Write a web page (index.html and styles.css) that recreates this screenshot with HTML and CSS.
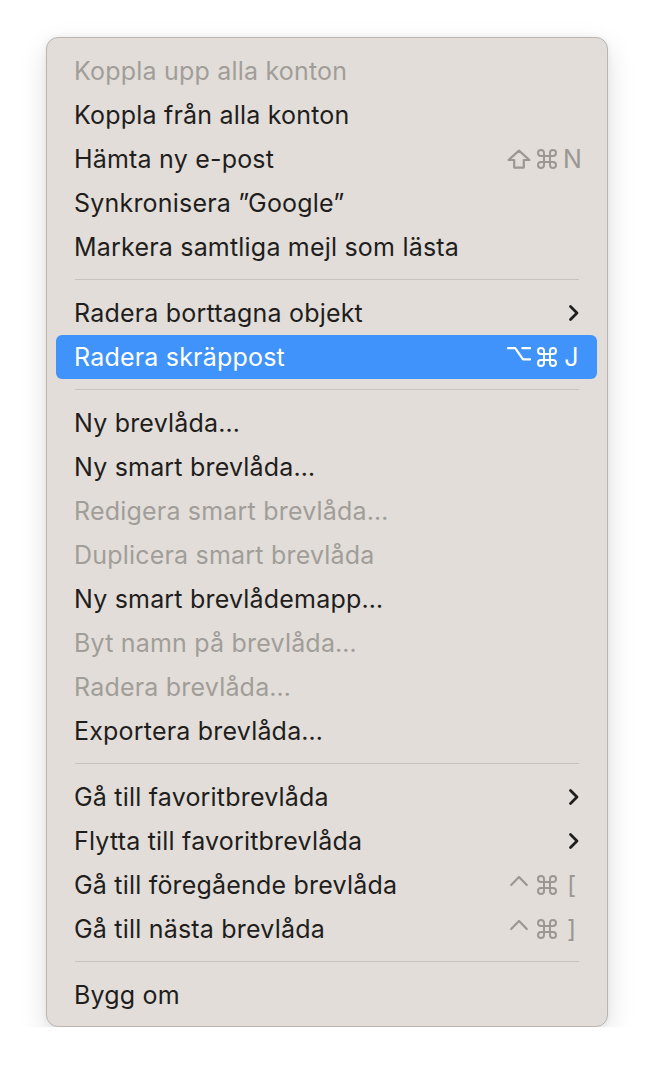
FILE: index.html
```html
<!DOCTYPE html>
<html lang="sv">
<head>
  <meta charset="UTF-8">
  <title>Brevlåda</title>
  <link rel="stylesheet" href="styles.css">
</head>
<body>
  <div class="menu">
    <div class="item disabled">Koppla upp alla konton</div>
    <div class="item">Koppla från alla konton</div>
    <div class="item">Hämta ny e-post
      <span class="keys">
        <svg class="mod wide" viewBox="0 0 24 20"><path d="M12 1.6 L22.4 11 H16.8 V18.6 H7.2 V11 H1.6 Z" /></svg>
        <svg class="mod" viewBox="2 2 20 20"><path d="M15 6v12a3 3 0 1 0 3-3H6a3 3 0 1 0 3 3V6a3 3 0 1 0-3 3h12a3 3 0 1 0-3-3" /></svg>
        <span class="key">N</span>
      </span>
    </div>
    <div class="item">Synkronisera ”Google”</div>
    <div class="item">Markera samtliga mejl som lästa</div>
    <div class="sep"></div>
    <div class="item">Radera borttagna objekt
      <svg class="arrow" viewBox="0 0 12 18"><path d="M2.5 2.5 L9 9 L2.5 15.5" /></svg>
    </div>
    <div class="item active">Radera skräppost
      <span class="keys">
        <svg class="mod wide" viewBox="0 0 24 20"><path d="M1 1.2 H8.2 L16 12.4 H23 M15.4 1.2 H23" /></svg>
        <svg class="mod" viewBox="2 2 20 20"><path d="M15 6v12a3 3 0 1 0 3-3H6a3 3 0 1 0 3 3V6a3 3 0 1 0-3 3h12a3 3 0 1 0-3-3" /></svg>
        <span class="key">J</span>
      </span>
    </div>
    <div class="sep"></div>
    <div class="item">Ny brevlåda…</div>
    <div class="item">Ny smart brevlåda…</div>
    <div class="item disabled">Redigera smart brevlåda…</div>
    <div class="item disabled">Duplicera smart brevlåda</div>
    <div class="item">Ny smart brevlådemapp…</div>
    <div class="item disabled">Byt namn på brevlåda…</div>
    <div class="item disabled">Radera brevlåda…</div>
    <div class="item">Exportera brevlåda…</div>
    <div class="sep"></div>
    <div class="item">Gå till favoritbrevlåda
      <svg class="arrow" viewBox="0 0 12 18"><path d="M2.5 2.5 L9 9 L2.5 15.5" /></svg>
    </div>
    <div class="item">Flytta till favoritbrevlåda
      <svg class="arrow" viewBox="0 0 12 18"><path d="M2.5 2.5 L9 9 L2.5 15.5" /></svg>
    </div>
    <div class="item">Gå till föregående brevlåda
      <span class="keys">
        <svg class="mod wide" viewBox="0 0 24 20"><path d="M4.2 10 L12 2 L19.8 10" /></svg>
        <svg class="mod" viewBox="2 2 20 20"><path d="M15 6v12a3 3 0 1 0 3-3H6a3 3 0 1 0 3 3V6a3 3 0 1 0-3 3h12a3 3 0 1 0-3-3" /></svg>
        <span class="key">[</span>
      </span>
    </div>
    <div class="item">Gå till nästa brevlåda
      <span class="keys">
        <svg class="mod wide" viewBox="0 0 24 20"><path d="M4.2 10 L12 2 L19.8 10" /></svg>
        <svg class="mod" viewBox="2 2 20 20"><path d="M15 6v12a3 3 0 1 0 3-3H6a3 3 0 1 0 3 3V6a3 3 0 1 0-3 3h12a3 3 0 1 0-3-3" /></svg>
        <span class="key">]</span>
      </span>
    </div>
    <div class="sep"></div>
    <div class="item">Bygg om</div>
  </div>
</body>
</html>
```

FILE: styles.css
```css
body {
  margin: 0;
  background: #ffffff;
  font-family: Inter, "Noto Sans", sans-serif;
}

.menu {
  margin: 37px 0 0 46px;
  width: 560px;
  padding: 11px 0 9px;
  background: #e2ddd8;
  border: 1px solid #b9b5b1;
  border-radius: 12px;
  box-shadow: 0 10px 28px rgba(0, 0, 0, 0.13), 0 0 6px rgba(0, 0, 0, 0.06);
}

.item {
  display: flex;
  align-items: center;
  justify-content: space-between;
  height: 44px;
  margin: 0 10px 0 9px;
  padding: 0 17px 0 18px;
  border-radius: 6px;
  font-size: 25px;
  letter-spacing: 0.2px;
  color: #1f1e1d;
}

.item.disabled {
  color: #a19d99;
}

.item.active {
  background: #3f93fb;
  color: #ffffff;
}

.keys {
  display: flex;
  align-items: center;
  color: #9b9793;
}

.item.active .keys {
  color: #ffffff;
}

.mod {
  width: 20px;
  height: 20px;
  margin-right: 6px;
  fill: none;
  stroke: currentColor;
  stroke-width: 2;
  stroke-linecap: round;
  stroke-linejoin: round;
}

.mod.wide {
  width: 24px;
  stroke-width: 2.2;
}

.key {
  width: 17px;
  text-align: center;
  font-size: 25px;
  letter-spacing: 0;
}

.arrow {
  width: 12px;
  height: 18px;
  fill: none;
  stroke: #1f1e1d;
  stroke-width: 2.8;
  stroke-linecap: round;
  stroke-linejoin: round;
}

.sep {
  height: 1px;
  margin: 10px 28px 11px 28px;
  background: #c7c2bd;
}
```
